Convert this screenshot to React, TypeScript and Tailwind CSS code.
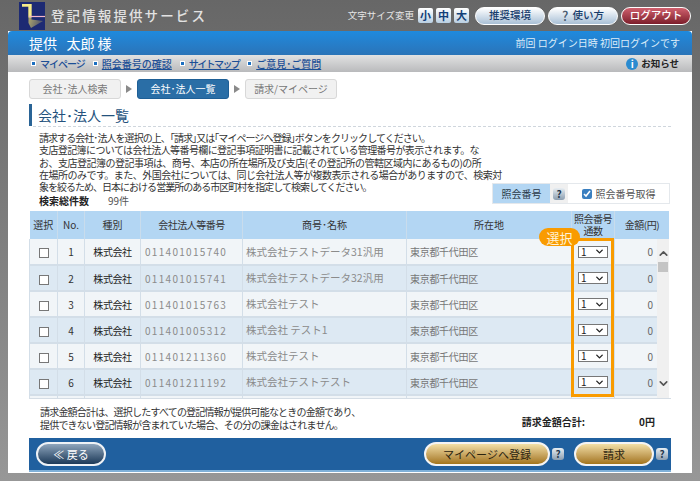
import { ChevronDown, ChevronUp } from 'lucide-react'

const ROWS = [
  { no: 1, code: '011401015740', name: '株式会社テストデータ31汎用' },
  { no: 2, code: '011401015741', name: '株式会社テストデータ32汎用' },
  { no: 3, code: '011401015763', name: '株式会社テスト' },
  { no: 4, code: '011401005312', name: '株式会社 テスト1' },
  { no: 5, code: '011401211360', name: '株式会社テスト' },
  { no: 6, code: '011401211192', name: '株式会社テストテスト' },
]

const FONT = 'font-["Noto_Sans_CJK_JP","Liberation_Sans",sans-serif]'

function Logo() {
  return (
    <svg width="26" height="28" viewBox="0 0 26 28" className="shrink-0">
      <defs>
        <linearGradient id="lg" x1="0" y1="0" x2="1" y2="0.4">
          <stop offset="0" stopColor="#f7e66a" />
          <stop offset="1" stopColor="#5c5f6e" />
        </linearGradient>
      </defs>
      <rect width="26" height="28" fill="#1d2a73" />
      <path d="M3 2h9.5v15.5L24 19l-12 7-2.5-5V4.5H3z" fill="url(#lg)" />
      <path d="M3 2h9.5v13.5h-3V4.5H3z" fill="#f7ec8a" />
      <path d="M10 14.5h16" stroke="#f4b7c8" strokeWidth="1.2" />
    </svg>
  )
}

function SizeButton({ label }: { label: string }) {
  return (
    <span className="flex h-[15px] w-[15px] items-center justify-center rounded-[2px] bg-gradient-to-b from-white to-[#b9cfe2] text-[11px] font-bold leading-none text-[#123f78]">
      {label}
    </span>
  )
}

function PillButton({ children, dark }: { children: React.ReactNode; dark?: boolean }) {
  return (
    <span
      className={`flex h-[18px] w-[70px] items-center justify-center rounded-full border border-white text-[10.5px] font-medium leading-none ${
        dark
          ? 'bg-gradient-to-b from-[#d0606e] to-[#7c1d2b] text-white'
          : 'bg-gradient-to-b from-white to-[#a9c0d6] text-[#173c6b]'
      }`}
    >
      {children}
    </span>
  )
}

function NavLink({ label, plain, tight }: { label: string; plain?: boolean; tight?: string }) {
  return (
    <span className="flex items-center gap-[4px]">
      <span className="h-[5px] w-[5px] border border-white bg-[#1c6fc0]" />
      <span className={`text-[10px] font-medium leading-none text-[#1c4f96] ${plain ? '' : 'underline'} ${tight ?? ''}`}>{label}</span>
    </span>
  )
}

function Step({ label, active }: { label: string; active?: boolean }) {
  return (
    <span
      className={`flex h-[20px] w-[92px] items-center justify-center rounded-[3px] border text-[10px] leading-none ${
        active ? 'border-[#1e5f96] bg-[#2a6ea6] text-white' : 'border-[#d8d8d8] bg-[#f1f1f1] text-[#777]'
      }`}
    >
      {label}
    </span>
  )
}

function StepArrow() {
  return <span className="mx-[5px] h-0 w-0 border-y-[4.5px] border-l-[6px] border-y-transparent border-l-[#8a8a8a]" />
}

function HelpIcon() {
  return (
    <span className="flex h-[12px] w-[12px] items-center justify-center rounded-[3px] bg-gradient-to-b from-[#e8eef3] to-[#8b9eb0] text-[10px] font-bold leading-none text-[#24384d]">
      ?
    </span>
  )
}

function GoldButton({ label, width }: { label: string; width: string }) {
  return (
    <span
      className={`flex h-[24px] ${width} items-center justify-center rounded-full border-2 border-[#f4f4f4] bg-gradient-to-b from-[#f2dfa6] to-[#a37518] text-[11px] leading-none text-[#2b2410]`}
    >
      {label}
    </span>
  )
}

export default function App() {
  return (
    <div className={`flex h-[481px] w-[700px] flex-col overflow-hidden bg-gradient-to-b from-[#676767] to-[#979797] ${FONT}`}>
      <header className="flex h-[31px] shrink-0 items-center pl-[19px] pr-[9px]">
        <Logo />
        <span className="ml-[6px] text-[13.5px] font-medium tracking-[2.1px] text-[#e2e2e2]">登記情報提供サービス</span>
        <span className="ml-auto text-[9.5px] text-[#e6e6e6]">文字サイズ変更</span>
        <span className="ml-[4px] flex gap-[3px]">
          <SizeButton label="小" />
          <SizeButton label="中" />
          <SizeButton label="大" />
        </span>
        <span className="ml-[6px] flex gap-[3px]">
          <PillButton>推奨環境</PillButton>
          <PillButton>
            <span className="mr-[4px] text-[13px] text-[#4a5d72]">?</span>使い方
          </PillButton>
          <PillButton dark>ログアウト</PillButton>
        </span>
      </header>

      <main className="mx-[8px] flex h-[442px] flex-col bg-white">
        <div className="flex h-[24px] items-center justify-between rounded-t-[4px] bg-gradient-to-b from-[#1e8ade] to-[#2a74b8] pl-[21px] pr-[12px] text-white">
          <span className="whitespace-pre text-[14px] leading-none">提供   太郎 様</span>
          <span className="text-[10px] leading-none text-[#dcecf8]">前回 ログイン日時 初回ログインです</span>
        </div>
        <nav className="flex h-[17px] items-center bg-gradient-to-b from-[#e2e2e2] to-[#b9babc] pl-[23px] pr-[13px]">
          <span className="flex gap-[8px]">
            <NavLink label="マイページ" plain tight="tracking-[-1px]" />
            <NavLink label="照会番号の確認" />
            <NavLink label="サイトマップ" tight="tracking-[-1.6px]" />
            <NavLink label="ご意見･ご質問" />
          </span>
          <span className="ml-auto flex items-center gap-[3px]">
            <span className="flex h-[12px] w-[12px] items-center justify-center rounded-full bg-[#2a8bd0] text-[10px] font-bold leading-none text-white">i</span>
            <span className="text-[9.5px] font-bold leading-none text-[#222]">お知らせ</span>
          </span>
        </nav>

        <div className="flex flex-1 flex-col px-[21px]">
          <div className="mt-[7px] flex items-center">
            <Step label="会社･法人検索" />
            <StepArrow />
            <Step label="会社･法人一覧" active />
            <StepArrow />
            <Step label="請求/マイページ" />
          </div>

          <h1 className="mt-[5px] flex h-[22px] items-center border-l-[3px] border-[#2a6496] pl-[6px] text-[14px] font-normal leading-none text-[#24527d]">
            会社･法人一覧
          </h1>
          <div className="ml-[4px] border-t border-dashed border-[#cfd6dd]" />

          <div className="relative h-[84px] pl-[10px] pt-[5px] text-[10px] leading-[12.3px] text-[#333]">
            <div className="whitespace-nowrap">
              <p className="tracking-[-0.94px]">請求する会社･法人を選択の上、｢請求｣又は｢マイページへ登録｣ボタンをクリックしてください。</p>
              <p className="tracking-[-0.6px]">支店登記簿については会社法人等番号欄に登記事項証明書に記載されている管理番号が表示されます。な</p>
              <p className="tracking-[-0.51px]">お、支店登記簿の登記事項は、商号、本店の所在場所及び支店(その登記所の管轄区域内にあるもの)の所</p>
              <p className="tracking-[-0.52px]">在場所のみです。また、外国会社については、同じ会社法人等が複数表示される場合がありますので、検索対</p>
              <p className="tracking-[-0.99px]">象を絞るため、日本における営業所のある市区町村を指定して検索してください。</p>
            </div>
            <p className="mt-[2px] flex items-center">
              <span className="font-bold text-[#222]">検索総件数</span>
              <span className="ml-[19px] text-[#555]">99件</span>
            </p>
            <div className="absolute right-[1px] top-[56px] flex h-[21px] w-[178px] border border-[#e4e8ec] text-[10px] leading-none">
              <span className="flex w-[57px] items-center justify-center bg-[#b3d6f3] text-[#2b3a48]">照会番号</span>
              <span className="flex w-[18px] items-center justify-center bg-[#f0f0f0]">
                <HelpIcon />
              </span>
              <label className="flex flex-1 items-center justify-center gap-[4px] text-[#555]">
                <input type="checkbox" defaultChecked readOnly className="h-[10px] w-[10px] accent-[#3a7fc0]" />
                照会番号取得
              </label>
            </div>
          </div>

          <div className="relative h-[188px] overflow-hidden border-b border-[#d5dde5]">
            <table className="w-[640px] table-fixed border-collapse text-[10px]">
              <thead>
                <tr className="h-[28px] bg-[#b3d6f3] leading-[12px] text-[#333]">
                  <th className="w-[28px] border-r border-[#c9dcec] font-normal">選択</th>
                  <th className="w-[27px] border-r border-[#c9dcec] font-normal">No.</th>
                  <th className="w-[56px] border-r border-[#c9dcec] font-normal">種別</th>
                  <th className="w-[102px] border-r border-[#c9dcec] font-normal tracking-[-0.5px]">会社法人等番号</th>
                  <th className="w-[164px] border-r border-[#c9dcec] font-normal">商号･名称</th>
                  <th className="w-[165px] border-r border-[#c9dcec] font-normal">所在地</th>
                  <th className="w-[43px] border-r border-[#c9dcec] font-normal tracking-[-0.5px]">
                    照会番号
                    <br />
                    通数
                  </th>
                  <th className="font-normal tracking-[-0.5px]">金額(円)</th>
                </tr>
              </thead>
              <tbody>
                {ROWS.map((row) => (
                  <tr key={row.no} className={`h-[26px] border-b-2 border-[#d3dee8] ${row.no % 2 ? 'bg-[#f1f5f8]' : 'bg-[#dde9f3]'}`}>
                    <td className="border-x border-[#d3dee8] text-center">
                      <input type="checkbox" readOnly className="h-[10px] w-[10px] appearance-none border border-[#777] bg-white align-middle" />
                    </td>
                    <td className="border-r border-[#d3dee8] text-center text-[#333]">{row.no}</td>
                    <td className="border-r border-[#d3dee8] text-center tracking-[-0.4px] text-[#222]">株式会社</td>
                    <td className="border-r border-[#d3dee8] pl-[4px] tracking-[1.3px] text-[#8b8b8b]">{row.code}</td>
                    <td className="border-r border-[#d3dee8] pl-[3px] text-[10.5px] text-[#8b8b8b]">{row.name}</td>
                    <td className="border-r border-[#d3dee8] pl-[3px] tracking-[-0.3px] text-[#777]">東京都千代田区</td>
                    <td className="border-r border-[#d3dee8] text-center">
                      <span className="mx-auto flex h-[12px] w-[30px] items-center justify-between border border-[#777] bg-white pl-[2px] pr-[2px] text-[10px] leading-none text-[#222]">
                        1
                        <ChevronDown size={11} strokeWidth={3} />
                      </span>
                    </td>
                    <td className="pr-[16px] text-right text-[#666]">0</td>
                  </tr>
                ))}
                <tr className="h-[26px] bg-[#f1f5f8]">
                  <td className="border-x border-[#d3dee8]" />
                  <td className="border-r border-[#d3dee8]" />
                  <td className="border-r border-[#d3dee8]" />
                  <td className="border-r border-[#d3dee8]" />
                  <td className="border-r border-[#d3dee8]" />
                  <td className="border-r border-[#d3dee8]" />
                  <td className="border-r border-[#d3dee8]" />
                  <td />
                </tr>
              </tbody>
            </table>

            <div className="absolute bottom-0 left-[628px] top-[28px] flex w-[12px] flex-col items-center bg-[#f0f0f0] text-[#555]">
              <ChevronUp size={13} strokeWidth={3} className="mt-[8px] shrink-0" />
              <span className="mt-[2px] h-[10px] w-[10px] bg-[#c4c4c4]" />
              <ChevronDown size={13} strokeWidth={3} className="mb-[8px] mt-auto shrink-0" />
            </div>

            <div className="absolute left-[542px] top-[27px] h-[159px] w-[43px] border-[3px] border-[#f99b00]" />
            <div className="absolute left-[510px] top-[17px] flex h-[18px] w-[41px] items-center justify-center rounded-full bg-[#f99b00] text-[13px] leading-none text-[#fff3d8]">
              選択
            </div>
          </div>

          <div className="flex h-[39px] items-center pb-[2px] pl-[11px] text-[10px] leading-[13px] text-[#333]">
            <p className="whitespace-nowrap tracking-[-0.8px]">
              請求金額合計は、選択したすべての登記情報が提供可能なときの金額であり、
              <br />
              提供できない登記情報が含まれていた場合、その分の課金はされません。
            </p>
            <p className="ml-auto mr-[16px] mt-[8px] flex font-bold text-[#222]">
              <span>請求金額合計:</span>
              <span className="ml-[54px]">0円</span>
            </p>
          </div>

          <footer className="flex h-[34px] items-center border-b-2 border-[#7fb0d8] bg-[#20609f] pl-[7px] pr-[3px]">
            <span className="flex h-[24px] w-[70px] items-center justify-center rounded-full border-2 border-[#eef2f6] bg-gradient-to-b from-[#8fa6bd] to-[#1d3a58] text-[11px] leading-none text-white">
              ≪ 戻る
            </span>
            <span className="ml-auto flex items-center gap-[2px]">
              <GoldButton label="マイページへ登録" width="w-[126px]" />
              <HelpIcon />
            </span>
            <span className="ml-[10px] flex items-center gap-[2px]">
              <GoldButton label="請求" width="w-[80px]" />
              <HelpIcon />
            </span>
          </footer>
        </div>
      </main>
    </div>
  )
}
